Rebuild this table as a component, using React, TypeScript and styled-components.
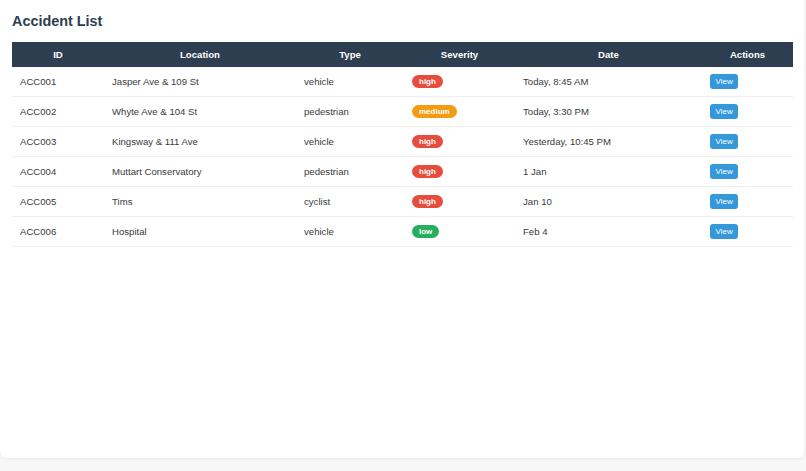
import React from "react";
import styled, { createGlobalStyle } from "styled-components";

const GlobalStyle = createGlobalStyle`
  html, body {
    margin: 0;
    padding: 0;
    background: #f7f7f7;
    font-family: "Liberation Sans", Arial, sans-serif;
  }
  * { box-sizing: border-box; }
`;

const Page = styled.div`
  width: 806px;
  height: 471px;
  padding: 0 2px 13px 0;
`;

const Card = styled.div`
  height: 100%;
  background: #ffffff;
  border-radius: 0 0 6px 6px;
  box-shadow: 0 1px 3px rgba(0, 0, 0, 0.06);
  padding: 12px 11px 12px 12px;
`;

const Title = styled.h2`
  margin: 1px 0 13px 0;
  font-size: 14.4px;
  line-height: 16px;
  font-weight: 700;
  color: #2c3e50;
`;

const Table = styled.table`
  width: 781px;
  border-collapse: separate;
  border-spacing: 0;
  table-layout: fixed;
  font-size: 9.6px;
`;

const Th = styled.th<{ $w: number }>`
  width: ${(p) => p.$w}px;
  background: #2c3e50;
  color: #ffffff;
  font-weight: 700;
  text-align: center;
  height: 25px;
  padding: 0 8px;
`;

const Td = styled.td`
  height: 30px;
  padding: 0 8px;
  color: #3a3a3a;
  text-align: left;
  white-space: nowrap;
  border-bottom: 1px solid #eeeeee;
`;

const colors: Record<string, string> = {
  high: "#e74c3c",
  medium: "#f39c12",
  low: "#27ae60",
};

const Badge = styled.span<{ $level: string }>`
  display: inline-block;
  background: ${(p) => colors[p.$level]};
  color: #ffffff;
  font-weight: 700;
  font-size: 8px;
  line-height: 13px;
  padding: 0 7px;
  border-radius: 7px;
`;

const ViewButton = styled.button`
  background: #3498db;
  color: #ffffff;
  border: none;
  border-radius: 3px;
  font-family: "Liberation Sans", Arial, sans-serif;
  font-size: 8px;
  line-height: 15px;
  padding: 0 5.5px;
  cursor: pointer;
`;

const columns = [
  { label: "ID", w: 92 },
  { label: "Location", w: 192 },
  { label: "Type", w: 108 },
  { label: "Severity", w: 111 },
  { label: "Date", w: 187 },
  { label: "Actions", w: 91 },
];

const rows = [
  { id: "ACC001", loc: "Jasper Ave & 109 St", type: "vehicle", sev: "high", date: "Today, 8:45 AM" },
  { id: "ACC002", loc: "Whyte Ave & 104 St", type: "pedestrian", sev: "medium", date: "Today, 3:30 PM" },
  { id: "ACC003", loc: "Kingsway & 111 Ave", type: "vehicle", sev: "high", date: "Yesterday, 10:45 PM" },
  { id: "ACC004", loc: "Muttart Conservatory", type: "pedestrian", sev: "high", date: "1 Jan" },
  { id: "ACC005", loc: "Tims", type: "cyclist", sev: "high", date: "Jan 10" },
  { id: "ACC006", loc: "Hospital", type: "vehicle", sev: "low", date: "Feb 4" },
];

export default function App() {
  return (
    <>
      <GlobalStyle />
      <Page>
        <Card>
          <Title>Accident List</Title>
          <Table>
            <thead>
              <tr>
                {columns.map((c) => (
                  <Th key={c.label} $w={c.w}>
                    {c.label}
                  </Th>
                ))}
              </tr>
            </thead>
            <tbody>
              {rows.map((r) => (
                <tr key={r.id}>
                  <Td>{r.id}</Td>
                  <Td>{r.loc}</Td>
                  <Td>{r.type}</Td>
                  <Td>
                    <Badge $level={r.sev}>{r.sev}</Badge>
                  </Td>
                  <Td>{r.date}</Td>
                  <Td>
                    <ViewButton>View</ViewButton>
                  </Td>
                </tr>
              ))}
            </tbody>
          </Table>
        </Card>
      </Page>
    </>
  );
}
